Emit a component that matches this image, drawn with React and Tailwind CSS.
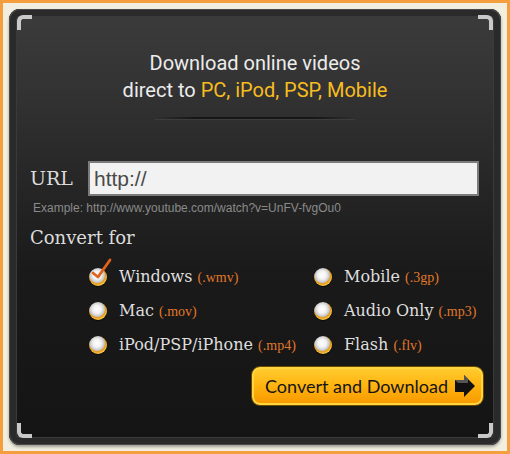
import React from 'react';

const options = [
  { label: 'Windows', ext: '(.wmv)', checked: true },
  { label: 'Mobile', ext: '(.3gp)' },
  { label: 'Mac', ext: '(.mov)' },
  { label: 'Audio Only', ext: '(.mp3)' },
  { label: 'iPod/PSP/iPhone', ext: '(.mp4)' },
  { label: 'Flash', ext: '(.flv)' },
];

function Radio({ checked }) {
  return (
    <span className="relative inline-block h-[18px] w-[18px] shrink-0 rounded-full bg-[radial-gradient(circle_at_45%_40%,#ffffff_0%,#f2f2f2_28%,#c4c4c4_50%,#e39a1c_56%,#f9c444_72%,#c47210_100%)] shadow-[0_1px_1px_rgba(0,0,0,0.6)]">
      {checked && (
        <svg className="absolute left-[1px] top-[-10px]" width="22" height="24" viewBox="0 0 22 24">
          <path d="M3 15 L8 19 L20 2" fill="none" stroke="#e2621b" strokeWidth="2.8" strokeLinecap="round" strokeLinejoin="round" />
        </svg>
      )}
    </span>
  );
}

function Corner({ pos }) {
  const map = {
    tl: 'left-[8px] top-[6px] border-l-[4px] border-t-[4px] rounded-tl-[6px]',
    tr: 'right-[8px] top-[6px] border-r-[4px] border-t-[4px] rounded-tr-[6px]',
    bl: 'left-[8px] bottom-[7px] border-l-[4px] border-b-[4px] rounded-bl-[6px]',
    br: 'right-[8px] bottom-[7px] border-r-[4px] border-b-[4px] rounded-br-[6px]',
  };
  return <span className={'absolute h-[15px] w-[15px] border-[#c9c9c9] ' + map[pos]} />;
}

function App() {
  return (
    <div className="h-[454px] w-[510px] border-[3px] border-[#f59e3d] bg-[#f2efe1] p-[6px]">
      <div className="relative flex h-[436px] flex-col rounded-[11px] bg-[linear-gradient(180deg,#3c3c3c_0%,#333_18%,#262626_40%,#1a1a1a_60%,#141414_100%)] shadow-[inset_0_0_0_1px_#4a4a4a,inset_0_0_0_7px_#2a2a2a,inset_0_0_0_8px_#3a3a3a,0_2px_3px_rgba(0,0,0,0.35)]">
        <Corner pos="tl" />
        <Corner pos="tr" />
        <Corner pos="bl" />
        <Corner pos="br" />

        <div className="mt-[41px] text-center font-['Roboto',sans-serif] text-[20px] leading-[27px] text-[#ececec]">
          <div>Download online videos</div>
          <div>
            direct to <span className="text-[#f7bd1f]">PC, iPod, PSP, Mobile</span>
          </div>
        </div>
        <div className="mx-auto mt-[13px] h-[2px] w-[200px] bg-[linear-gradient(90deg,transparent,#161616_20%,#161616_80%,transparent)] shadow-[0_1px_0_rgba(255,255,255,0.07)]" />

        <div className="mt-[42px] flex items-center pl-[21px]">
          <span className="w-[58px] font-['DejaVu_Serif',serif] text-[19px] text-[#dcdcdc]">URL</span>
          <div className="flex h-[35px] w-[391px] items-center border-2 border-[#7b7b7b] bg-[#f2f2f2] pl-[4px] font-['Liberation_Sans',sans-serif] text-[21px] text-[#4a4a4a]">
            http://
          </div>
        </div>
        <div className="mt-[3px] pl-[24px] font-['Liberation_Sans',sans-serif] text-[12px] text-[#8a8a8a]">
          Example: http://www.youtube.com/watch?v=UnFV-fvgOu0
        </div>

        <div className="mt-[7px] pl-[21px] font-['DejaVu_Serif',serif] text-[18px] text-[#dcdcdc]">Convert for</div>

        <div className="mt-[14px] grid grid-cols-[225px_auto] gap-y-[10px] pl-[80px] font-['DejaVu_Serif',serif]">
          {options.map((o) => (
            <div key={o.label} className="flex h-[24px] items-center gap-[12px]">
              <Radio checked={o.checked} />
              <span className="whitespace-nowrap text-[16px] text-[#dedede]">
                {o.label}{' '}
                <span className="font-['Liberation_Serif',serif] text-[14px] text-[#e0782a]">{o.ext}</span>
              </span>
            </div>
          ))}
        </div>

        <div className="mt-[10px] flex justify-end pr-[18px]">
          <button className="flex h-[38px] w-[231px] items-center justify-between rounded-[8px] border-2 border-[#ffd640] bg-[linear-gradient(180deg,#ffcb2e_0%,#ffb30f_50%,#f79a00_100%)] pl-[11px] pr-[5px] font-['Lato',sans-serif] text-[18px] whitespace-nowrap text-[#141414] shadow-[0_0_0_1px_#6b4a00]">
            <span>Convert and Download</span>
            <svg width="22" height="24" viewBox="0 0 22 24">
              <path d="M1 6 H10 V1 L21 12 L10 23 V18 H1 Z" fill="#111" />
              <path d="M1 6 H10 V1 L14 5 V9 H4 Z" fill="#555" />
            </svg>
          </button>
        </div>
      </div>
    </div>
  );
}

export default App;
